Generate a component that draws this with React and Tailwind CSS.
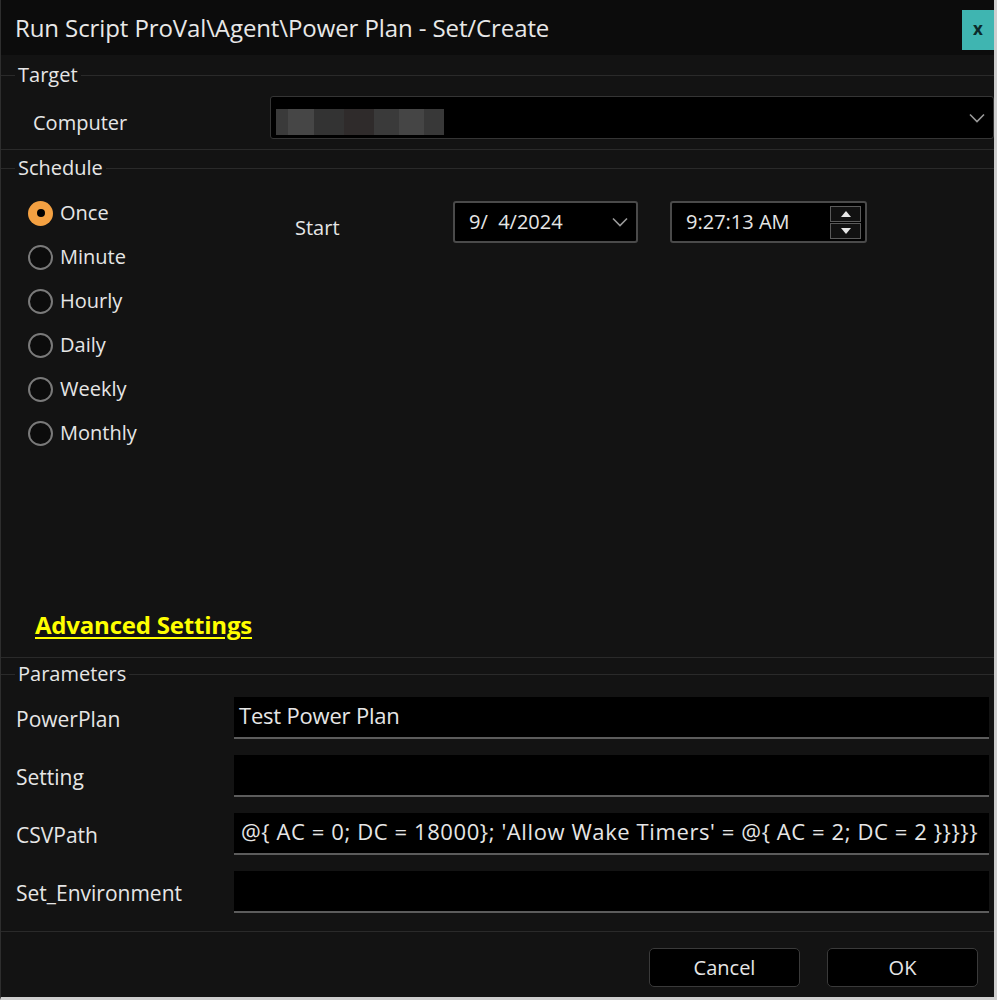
const font = { fontFamily: '"Open Sans", "Noto Sans", sans-serif' };

function GroupHeader({ label, className = "" }) {
  return (
    <div className={`flex items-center h-[20px] ${className}`}>
      <div className="w-[14px] h-px bg-[#2a2a2a]" />
      <span className="px-[3px] text-[20px] leading-none text-[#e6e6e6]">{label}</span>
      <div className="flex-1 h-px bg-[#2a2a2a]" />
    </div>
  );
}

function Chevron({ className = "" }) {
  return (
    <svg className={className} width="16" height="10" viewBox="0 0 16 10" fill="none">
      <path d="M1 1.5 L8 8.5 L15 1.5" stroke="#9a9a9a" strokeWidth="1.6" />
    </svg>
  );
}

function Radio({ label, checked }) {
  return (
    <div className="flex items-center h-[44px] pl-[27px] gap-[7px]">
      {checked ? (
        <div className="w-[25px] h-[25px] rounded-full bg-[#f4a142] flex items-center justify-center">
          <div className="w-[8px] h-[8px] rounded-full bg-black" />
        </div>
      ) : (
        <div className="w-[25px] h-[25px] rounded-full border-2 border-[#7a7a7a] bg-[#0c0c0c]" />
      )}
      <span className="text-[20px] text-[#e6e6e6]">{label}</span>
    </div>
  );
}

function ParamRow({ label, value, wide }) {
  return (
    <div className="flex items-center h-[42px] mb-[16px]">
      <span className="w-[233px] pl-[15px] pt-[3px] text-[21px] text-[#e6e6e6]">{label}</span>
      <div className="w-[755px] h-[42px] bg-black border-b-2 border-[#5c5c5c] flex items-center overflow-hidden">
        {value ? (
          <span
            className={`pl-[5px] pb-[4px] text-[22px] text-[#e6e6e6] whitespace-nowrap ${
              wide ? "tracking-[0.6px] pl-[7px]" : "tracking-[-0.2px]"
            }`}
          >
            {value}
          </span>
        ) : null}
      </div>
    </div>
  );
}

export default function App() {
  return (
    <div
      style={font}
      className="w-[997px] h-[1000px] bg-[#131313] flex flex-col overflow-hidden border-l border-l-[#2e2e2e] border-r-[3px] border-r-[#cfcfcf] border-b-[3px] border-b-[#cfcfcf]"
    >
      {/* title bar */}
      <div className="h-[55px] shrink-0 bg-[#0c0c0c] flex items-center justify-between pl-[14px]">
        <span className="text-[24px] text-[#e8e8e8] tracking-[-0.1px]">
          Run Script ProVal\Agent\Power Plan - Set/Create
        </span>
        <div className="w-[32px] h-[40px] bg-[#3fb5b1] flex items-center justify-center mt-[5px]">
          <span className="text-[17px] font-bold text-[#0b2a2a] leading-none pb-[3px]">x</span>
        </div>
      </div>

      {/* Target */}
      <GroupHeader label="Target" className="mt-[10px]" />
      <div className="flex items-center mt-[11px] h-[43px]">
        <span className="w-[269px] pl-[32px] pt-[10px] text-[20px] text-[#e6e6e6]">Computer</span>
        <div className="flex-1 h-[43px] bg-black border border-[#353535] rounded-[3px] flex items-center justify-between pr-[8px]">
          <div className="ml-[5px] mt-[8px] w-[168px] h-[26px] flex">
            <div className="w-[12px] bg-[#3a3a3a]" />
            <div className="w-[26px] bg-[#464646]" />
            <div className="w-[30px] bg-[#333333]" />
            <div className="w-[30px] bg-[#2f2b2b]" />
            <div className="w-[25px] bg-[#3a3a3a]" />
            <div className="w-[25px] bg-[#454545]" />
            <div className="flex-1 bg-[#383838]" />
          </div>
          <Chevron />
        </div>
      </div>
      <div className="h-px bg-[#2a2a2a] mt-[10px]" />

      {/* Schedule */}
      <GroupHeader label="Schedule" className="mt-[8px]" />
      <div className="h-[479px] flex flex-col">
        <div className="flex mt-[13px]">
          <div className="w-[268px] flex flex-col">
            <Radio label="Once" checked />
            <Radio label="Minute" />
            <Radio label="Hourly" />
            <Radio label="Daily" />
            <Radio label="Weekly" />
            <Radio label="Monthly" />
          </div>
          <div className="flex items-center h-[42px] mt-[10px]">
            <span className="w-[184px] pl-[26px] pt-[12px] text-[20px] text-[#e6e6e6]">Start</span>
            <div className="w-[185px] h-[42px] bg-black border-2 border-[#4a4a4a] rounded-[3px] flex items-center justify-between pl-[14px] pr-[8px]">
              <span className="text-[20px] text-[#e6e6e6] whitespace-pre">9/  4/2024</span>
              <Chevron />
            </div>
            <div className="ml-[32px] w-[197px] h-[42px] bg-black border-2 border-[#4a4a4a] rounded-[3px] flex items-center justify-between pl-[14px] pr-[4px]">
              <span className="text-[20px] text-[#e6e6e6]">9:27:13 AM</span>
              <div className="flex flex-col gap-[1px]">
                <div className="w-[31px] h-[16px] border border-[#5a5a5a] bg-[#111] flex items-center justify-center">
                  <svg width="10" height="6" viewBox="0 0 10 6"><path d="M0 6 L5 0 L10 6 Z" fill="#e6e6e6" /></svg>
                </div>
                <div className="w-[31px] h-[16px] border border-[#5a5a5a] bg-[#111] flex items-center justify-center">
                  <svg width="10" height="6" viewBox="0 0 10 6"><path d="M0 0 L5 6 L10 0 Z" fill="#e6e6e6" /></svg>
                </div>
              </div>
            </div>
          </div>
        </div>
        <div className="flex-1" />
        <div className="pl-[34px] pb-[14px]">
          <span className="text-[24px] font-bold text-[#ffff00] underline underline-offset-[3px] decoration-2 tracking-[-0.2px]">
            Advanced Settings
          </span>
        </div>
      </div>
      <div className="h-px bg-[#2a2a2a]" />

      {/* Parameters */}
      <GroupHeader label="Parameters" className="mt-[6px]" />
      <div className="flex flex-col mt-[13px]">
        <ParamRow label="PowerPlan" value="Test Power Plan" />
        <ParamRow label="Setting" />
        <ParamRow label="CSVPath" value="@{ AC = 0; DC = 18000}; 'Allow Wake Timers' = @{ AC = 2; DC = 2 }}}}}" wide />
        <ParamRow label="Set_Environment" />
      </div>
      <div className="h-px bg-[#2a2a2a] mt-[2px]" />

      {/* buttons */}
      <div className="flex justify-end gap-[27px] pr-[16px] mt-[16px]">
        <div className="w-[151px] h-[39px] bg-black border border-[#3a3a3a] rounded-[5px] flex items-center justify-center">
          <span className="text-[20px] text-[#e6e6e6]">Cancel</span>
        </div>
        <div className="w-[151px] h-[39px] bg-black border border-[#3a3a3a] rounded-[5px] flex items-center justify-center">
          <span className="text-[20px] text-[#e6e6e6]">OK</span>
        </div>
      </div>
    </div>
  );
}
